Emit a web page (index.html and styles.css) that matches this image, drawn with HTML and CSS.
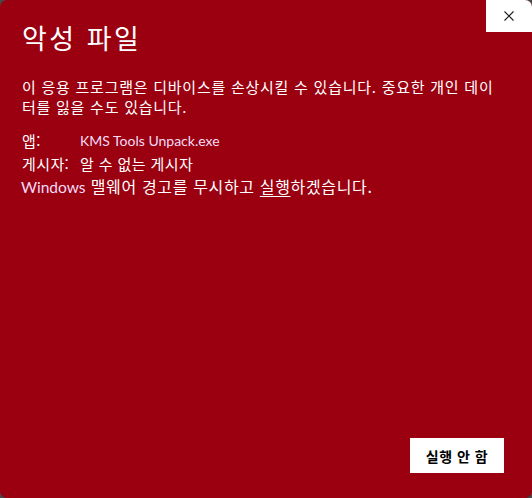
FILE: index.html
```html
<!DOCTYPE html>
<html lang="ko">
<head>
<meta charset="utf-8">
<title>악성 파일</title>
<link rel="stylesheet" href="styles.css">
</head>
<body>
<div class="window">
  <div class="titlebar">
    <h1 class="title">악성 파일</h1>
    <button class="close" aria-label="닫기">
      <svg width="10" height="10" viewBox="0 0 10 10"><path d="M0.5 0.5 L9.5 9.5 M9.5 0.5 L0.5 9.5" stroke="#1a1a1a" stroke-width="1.1" fill="none"/></svg>
    </button>
  </div>
  <p class="desc">이 응용 프로그램은 디바이스를 손상시킬 수 있습니다. 중요한 개인 데이<br>터를 잃을 수도 있습니다.</p>
  <div class="info">
    <div class="row"><span class="label">앱:</span><span class="value latin app">KMS Tools Unpack.exe</span></div>
    <div class="row"><span class="label">게시자:</span><span class="value">알 수 없는 게시자</span></div>
    <div class="row run"><span class="latin">Windows</span> 맬웨어 경고를 무시하고 <span class="link">실행</span>하겠습니다.</div>
  </div>
  <div class="footer">
    <button class="btn">실행 안 함</button>
  </div>
</div>
</body>
</html>
```
FILE: styles.css
```css
html, body {
  margin: 0;
  padding: 0;
  background: #454a46;
}
body {
  width: 532px;
  height: 498px;
  overflow: hidden;
  font-family: "Noto Sans CJK KR", "Noto Sans", sans-serif;
  color: #ffffff;
}
.window {
  width: 532px;
  height: 498px;
  background: #9a0010;
  border-radius: 7px;
  overflow: hidden;
  display: flex;
  flex-direction: column;
}
.titlebar {
  display: flex;
  justify-content: space-between;
  align-items: flex-start;
}
.title {
  margin: 0;
  padding: 20px 0 0 22px;
  font-size: 27px;
  line-height: 36px;
  font-weight: normal;
  letter-spacing: 2.5px;
}
.close {
  width: 46px;
  height: 32px;
  border: none;
  padding: 0;
  margin: 0;
  background: #ffffff;
  display: flex;
  align-items: center;
  justify-content: center;
}
.close svg {
  display: block;
}
.desc {
  margin: 21px 0 0 22px;
  font-size: 15px;
  line-height: 20px;
  white-space: nowrap;
  letter-spacing: 0.75px;
}
.info {
  margin: 12px 0 0 22px;
  font-size: 15px;
  line-height: 23px;
  letter-spacing: 0.4px;
}
.row {
  display: flex;
  white-space: pre;
}
.label {
  width: 58px;
  flex: none;
}
.latin {
  font-family: "Lato", "Noto Sans CJK KR", sans-serif;
  font-size: 15.5px;
  letter-spacing: 0;
  color: #f3dcf6;
}
.latin.app {
  font-size: 14px;
}
.run {
  display: block;
  margin-left: -1px;
  font-size: 16px;
  letter-spacing: 0.65px;
}
.link {
  text-decoration: underline;
  text-underline-offset: 3px;
}
.footer {
  margin-top: auto;
  display: flex;
  justify-content: flex-end;
  padding: 0 28px 25px 0;
}
.btn {
  width: 94px;
  height: 35px;
  border: none;
  background: #ffffff;
  color: #000000;
  font-family: "Noto Sans CJK KR", sans-serif;
  font-size: 14px;
  font-weight: bold;
  letter-spacing: 0.5px;
  padding: 0;
}
```
